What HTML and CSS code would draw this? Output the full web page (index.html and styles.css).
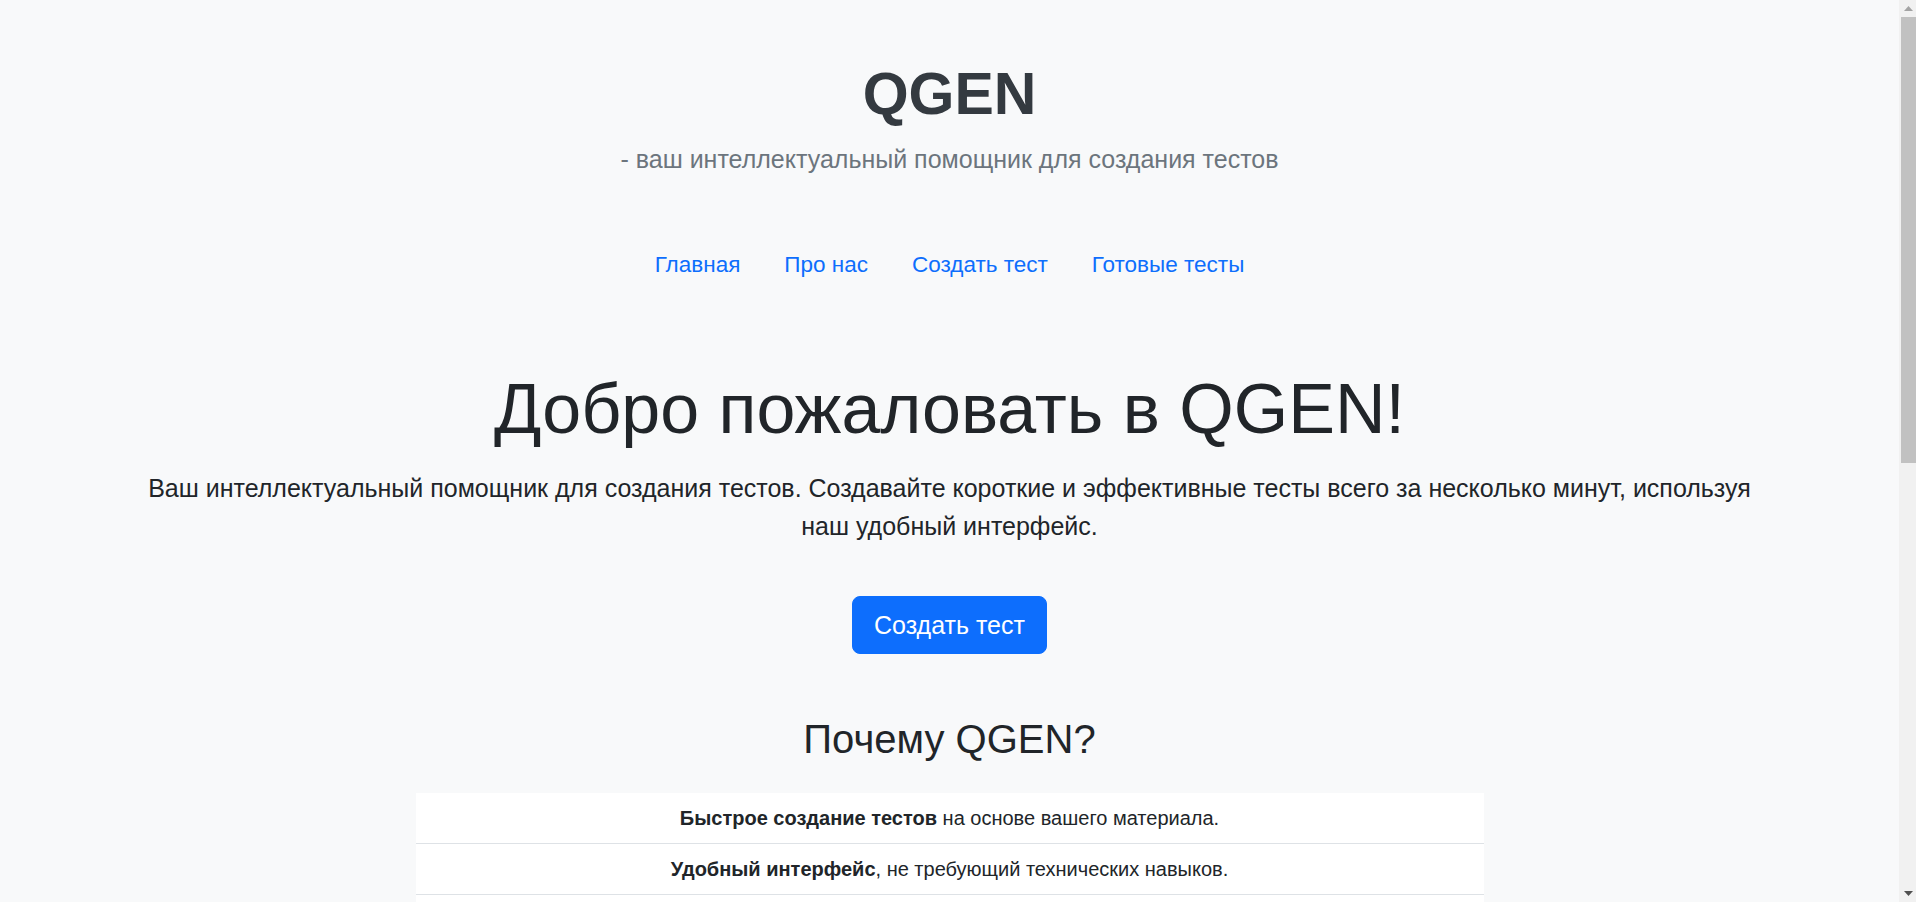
FILE: index.html
```html
<!DOCTYPE html>
<html lang="ru">
<head>
<meta charset="utf-8">
<title>QGEN</title>
<link rel="stylesheet" href="styles.css">
</head>
<body>
<div class="page">
  <header class="site-header">
    <h1 class="brand">QGEN</h1>
    <p class="tagline">- ваш интеллектуальный помощник для создания тестов</p>
    <nav class="main-nav">
      <a class="nav-link" href="#">Главная</a>
      <a class="nav-link" href="#">Про нас</a>
      <a class="nav-link" href="#">Создать тест</a>
      <a class="nav-link" href="#">Готовые тесты</a>
    </nav>
  </header>
  <main class="container">
    <section class="hero">
      <h1 class="hero-title">Добро пожаловать в QGEN!</h1>
      <p class="lead">Ваш интеллектуальный помощник для создания тестов. Создавайте короткие и эффективные тесты всего за несколько минут, используя наш удобный интерфейс.</p>
      <a class="btn-primary" href="#">Создать тест</a>
    </section>
    <section class="why">
      <h2 class="section-title">Почему QGEN?</h2>
      <ul class="feature-list">
        <li class="feature-item"><strong>Быстрое создание тестов</strong> на основе вашего материала.</li>
        <li class="feature-item"><strong>Удобный интерфейс</strong>, не требующий технических навыков.</li>
        <li class="feature-item"><strong>Гибкие настройки</strong> количества и типа вопросов.</li>
        <li class="feature-item"><strong>Готовые тесты</strong> можно сохранить и использовать повторно.</li>
      </ul>
    </section>
    <section class="how">
      <h2 class="section-title">Как это работает?</h2>
      <ol class="feature-list">
        <li class="feature-item">Загрузите или вставьте учебный материал.</li>
        <li class="feature-item">Выберите количество вопросов и их тип.</li>
        <li class="feature-item">Получите готовый тест за несколько секунд.</li>
      </ol>
    </section>
    <section class="cta">
      <a class="btn-primary" href="#">Начать сейчас</a>
    </section>
  </main>
  <footer class="site-footer">
    <p class="copy">© 2024 QGEN. Все права защищены.</p>
  </footer>
</div>
<div class="scrollbar" aria-hidden="true">
  <div class="sb-btn"><svg width="9" height="5" viewBox="0 0 9 5"><polygon points="0,5 4.5,0 9,5" fill="#a3a3a3"/></svg></div>
  <div class="sb-track"><div class="sb-thumb"></div></div>
  <div class="sb-btn"><svg width="9" height="5" viewBox="0 0 9 5"><polygon points="0,0 4.5,5 9,0" fill="#505050"/></svg></div>
</div>
</body>
</html>
```

FILE: styles.css
```css
html, body {
  margin: 0;
  padding: 0;
}
body {
  background: #f8f9fa;
  color: #212529;
  font-family: "Liberation Sans", Arial, sans-serif;
  font-size: 20px;
  line-height: 1.5;
}
.page {
  margin-right: 17px;
}
.scrollbar {
  position: fixed;
  top: 0;
  right: 0;
  width: 17px;
  height: 100vh;
  background: #f1f1f1;
  display: flex;
  flex-direction: column;
}
.sb-btn {
  height: 17px;
  flex: 0 0 17px;
  display: flex;
  align-items: center;
  justify-content: center;
  padding-left: 2px;
}
.sb-btn svg {
  display: block;
}
.sb-track {
  flex: 1;
}
.sb-thumb {
  height: 446px;
  margin-left: 2px;
  background: #c1c1c1;
}
.site-header {
  text-align: center;
  padding-top: 59px;
}
.brand {
  margin: 0;
  font-size: 59px;
  line-height: 1.2;
  font-weight: 700;
  color: #343a40;
}
.tagline {
  margin: 11px 0 0;
  font-size: 25px;
  line-height: 1.5;
  color: #6c757d;
}
.main-nav {
  margin-top: 60px;
  display: flex;
  justify-content: center;
}
.nav-link {
  display: block;
  padding: 10px 22px;
  font-size: 22.5px;
  line-height: 1.5;
  color: #0d6efd;
  text-decoration: none;
}
.container {
  max-width: 1650px;
  margin: 0 auto;
  padding: 0 15px;
  box-sizing: border-box;
  text-align: center;
}
.hero {
  padding-top: 75px;
}
.hero-title {
  margin: 0;
  font-size: 70px;
  font-weight: 400;
  line-height: 1.2;
}
.lead {
  margin: 19px 0 0;
  font-size: 25px;
  line-height: 1.5;
}
.btn-primary {
  display: inline-block;
  margin-top: 51px;
  height: 58px;
  box-sizing: border-box;
  padding: 0 21px;
  line-height: 56px;
  font-size: 25px;
  color: #fff;
  background: #0d6efd;
  border: 1px solid #0d6efd;
  border-radius: 8px;
  text-decoration: none;
}
.why {
  padding-top: 61px;
}
.section-title {
  margin: 0;
  font-size: 40px;
  font-weight: 400;
  line-height: 1.2;
}
.feature-list {
  list-style: none;
  margin: 30px auto 0;
  padding: 0;
  width: 1068px;
  background: #fff;
}
.feature-item {
  padding: 10px 20px;
  font-size: 20px;
  line-height: 1.5;
  border-bottom: 1px solid #dee2e6;
}
.feature-item:last-child {
  border-bottom: 0;
}
.how {
  padding-top: 75px;
}
.cta {
  padding-top: 24px;
}
.site-footer {
  margin-top: 150px;
  padding: 72px 0;
  text-align: center;
  background: #f1f3f5;
}
.copy {
  margin: 0;
  font-size: 18px;
  color: #6c757d;
}
```
